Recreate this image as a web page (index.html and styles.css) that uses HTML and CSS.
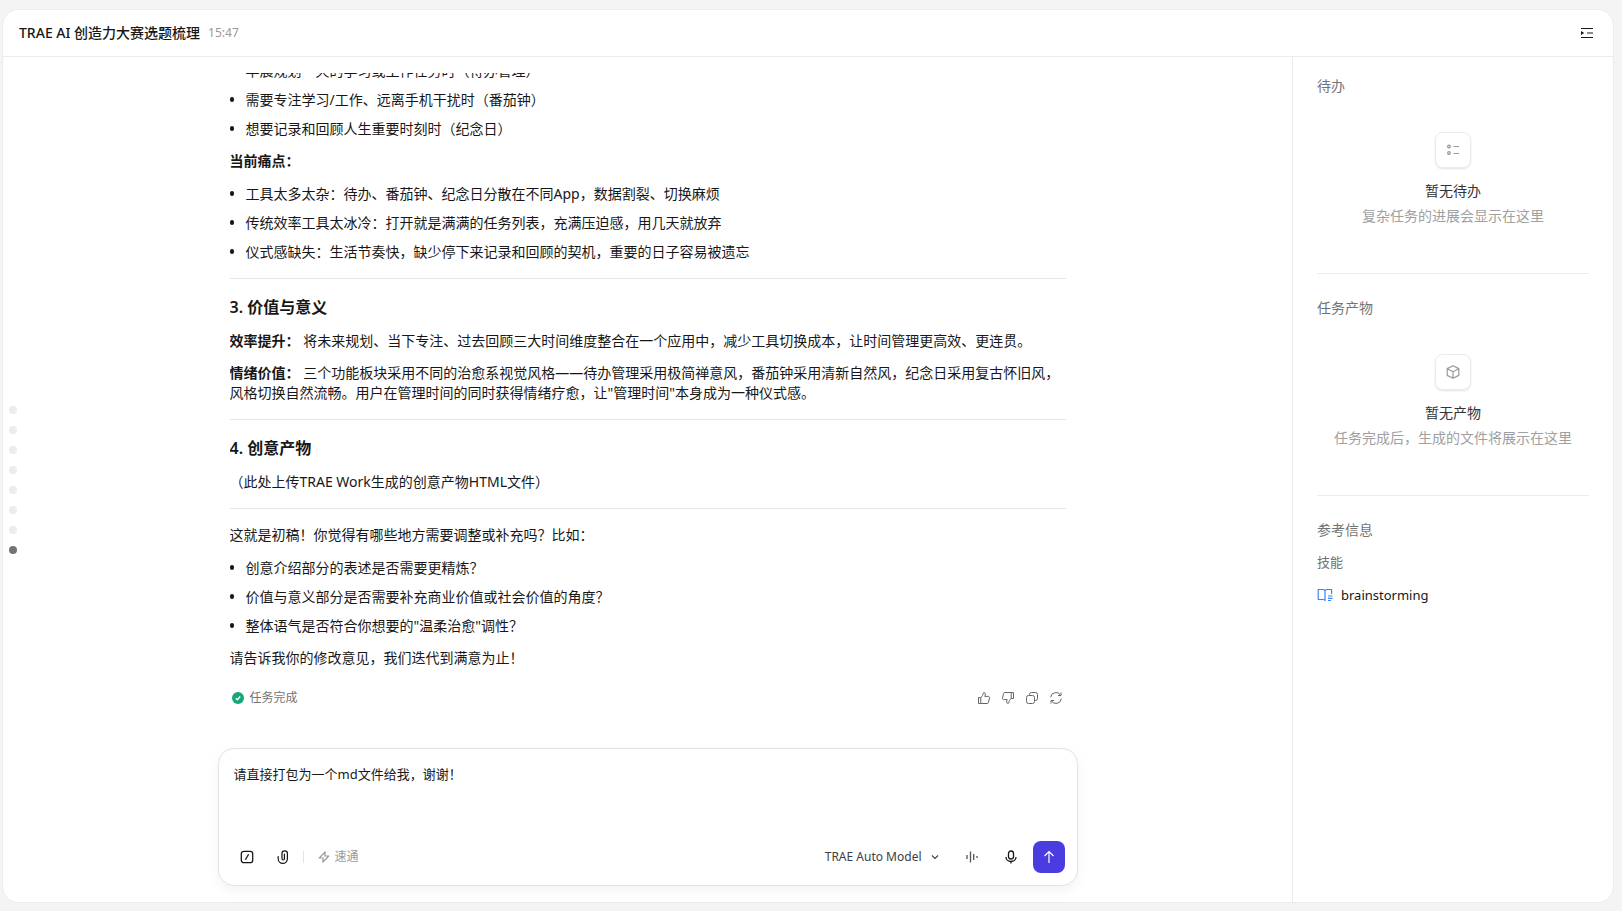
FILE: index.html
```html
<!DOCTYPE html>
<html lang="zh-CN">
<head>
  <meta charset="UTF-8">
  <meta name="viewport" content="width=device-width, initial-scale=1.0">
  <title>TRAE AI 创造力大赛选题梳理</title>
  <link rel="stylesheet" href="styles.css">
</head>
<body>
  <div class="window">
    <header class="topbar">
      <h1>TRAE AI 创造力大赛选题梳理</h1>
      <time>15:47</time>
      <button class="icon-btn toggle" type="button" aria-label="收起侧栏">
        <svg width="14" height="14" viewBox="0 0 14 14" fill="none" stroke="currentColor" stroke-width="1.2"><path d="M1 2.5h12M7 7h6M1 11.500h12"/><path d="M1 5v4l3.200-2z" fill="currentColor" stroke="none"/></svg>
      </button>
    </header>

    <div class="body">
      <main class="chat">
        <nav class="turns" aria-label="对话轮次">
          <span></span><span></span><span></span><span></span><span></span><span></span><span></span><span class="current"></span>
        </nav>

        <div class="scroll">
          <article class="message">
            <ul>
              <li>早晨规划一天的学习或工作任务时（待办管理）</li>
              <li>需要专注学习/工作、远离手机干扰时（番茄钟）</li>
              <li>想要记录和回顾人生重要时刻时（纪念日）</li>
            </ul>
            <p><strong>当前痛点：</strong></p>
            <ul>
              <li>工具太多太杂：待办、番茄钟、纪念日分散在不同App，数据割裂、切换麻烦</li>
              <li>传统效率工具太冰冷：打开就是满满的任务列表，充满压迫感，用几天就放弃</li>
              <li>仪式感缺失：生活节奏快，缺少停下来记录和回顾的契机，重要的日子容易被遗忘</li>
            </ul>
            <hr>
            <h3>3. 价值与意义</h3>
            <p><strong>效率提升：</strong> 将未来规划、当下专注、过去回顾三大时间维度整合在一个应用中，减少工具切换成本，让时间管理更高效、更连贯。</p>
            <p><strong>情绪价值：</strong> 三个功能板块采用不同的治愈系视觉风格——待办管理采用极简禅意风，番茄钟采用清新自然风，纪念日采用复古怀旧风，风格切换自然流畅。用户在管理时间的同时获得情绪疗愈，让"管理时间"本身成为一种仪式感。</p>
            <hr>
            <h3>4. 创意产物</h3>
            <p>（此处上传TRAE Work生成的创意产物HTML文件）</p>
            <hr>
            <p>这就是初稿！你觉得有哪些地方需要调整或补充吗？比如：</p>
            <ul>
              <li>创意介绍部分的表述是否需要更精炼？</li>
              <li>价值与意义部分是否需要补充商业价值或社会价值的角度？</li>
              <li>整体语气是否符合你想要的"温柔治愈"调性？</li>
            </ul>
            <p>请告诉我你的修改意见，我们迭代到满意为止！</p>
          </article>

          <div class="status">
            <svg width="12" height="12" viewBox="0 0 12 12"><circle cx="6" cy="6" r="6" fill="#16a679"/><path d="M3.800 6.200l1.500 1.500 2.900-3.200" fill="none" stroke="#fff" stroke-width="1.300"/></svg>
            <span>任务完成</span>
            <div class="feedback">
              <button class="icon-btn" type="button" aria-label="赞"><svg width="14" height="14" viewBox="0 0 14 14" fill="none" stroke="currentColor" stroke-linejoin="round"><path d="M1.500 6.500h2.300v6H1.500zM3.800 6.500C5.200 5.500 6 4 6.200 2.200 6.300 1.200 8.300 1 8.300 3c0 .9-.2 1.600-.5 2.400h3.500c.9 0 1.400.7 1.200 1.500l-1 4.400c-.2.800-.7 1.200-1.400 1.200H3.800"/></svg></button>
              <button class="icon-btn" type="button" aria-label="踩"><svg width="14" height="14" viewBox="0 0 14 14" fill="none" stroke="currentColor" stroke-linejoin="round"><path d="M12.500 7.500h-2.300v-6h2.300zM10.200 7.500C8.800 8.500 8 10 7.800 11.800 7.700 12.800 5.700 13 5.700 11c0-.9.2-1.600.5-2.400H2.700c-.9 0-1.400-.7-1.200-1.500l1-4.400c.2-.8.700-1.200 1.400-1.200h6.300"/></svg></button>
              <button class="icon-btn" type="button" aria-label="复制"><svg width="14" height="14" viewBox="0 0 14 14" fill="none" stroke="currentColor"><rect x="1.500" y="4.500" width="8" height="8" rx="2"/><path d="M4.500 4.500V3.500a2 2 0 0 1 2-2h4a2 2 0 0 1 2 2v4a2 2 0 0 1-2 2h-1"/></svg></button>
              <button class="icon-btn" type="button" aria-label="重新生成"><svg width="14" height="14" viewBox="0 0 14 14" fill="none" stroke="currentColor"><path d="M1.700 6.300a5.300 5.300 0 0 1 9.800-2.200M12.300 7.700a5.300 5.300 0 0 1-9.800 2.200M12 1.500v3H9M2 12.500v-3h3"/></svg></button>
            </div>
          </div>
        </div>

        <form class="composer">
          <textarea aria-label="消息" rows="3">请直接打包为一个md文件给我，谢谢！</textarea>
          <div class="tools">
            <button class="icon-btn" type="button" aria-label="指令"><svg width="14" height="14" viewBox="0 0 14 14" fill="none" stroke="currentColor" stroke-width="1.300"><rect x="1.300" y="1.300" width="11.400" height="11.400" rx="2.500"/><path d="M8.600 4.200L5.400 9.800"/></svg></button>
            <button class="icon-btn attach" type="button" aria-label="附件"><svg width="14" height="14" viewBox="0 0 14 14" fill="none" stroke="currentColor" stroke-width="1.200" stroke-linecap="round"><path d="M2.200 6.500v2.300a4.600 4.600 0 0 0 9.200 0V3.600a2.700 2.700 0 0 0-5.400 0v5.200a1.200 1.200 0 0 0 2.400 0V4"/></svg></button>
            <span class="sep"></span>
            <button class="fast" type="button"><svg width="12" height="12" viewBox="0 0 12 12" fill="none" stroke="currentColor" stroke-width="1.200" stroke-linejoin="round"><path d="M7.200 .8L1.200 7h4L4.800 11.200 10.800 5h-4z"/></svg>速通</button>
            <button class="model" type="button">TRAE Auto Model<svg width="8" height="8" viewBox="0 0 8 8" fill="none" stroke="currentColor" stroke-width="1.100"><path d="M1 2.500l3 3 3-3"/></svg></button>
            <button class="icon-btn wave" type="button" aria-label="语音模式"><svg width="14" height="14" viewBox="0 0 14 14" fill="none" stroke="currentColor" stroke-width="1.300"><path d="M2 5v4M5.500 1.500v11M8.700 4v6M12 6v2"/></svg></button>
            <button class="icon-btn mic" type="button" aria-label="语音输入"><svg width="14" height="14" viewBox="0 0 14 14" fill="none" stroke="currentColor" stroke-width="1.300"><rect x="4.500" y="1" width="5" height="8" rx="2.500"/><path d="M2 7a5 4.500 0 0 0 10 0M7 11.400v2"/></svg></button>
            <button class="send" type="submit" aria-label="发送"><svg width="14" height="14" viewBox="0 0 14 14" fill="none" stroke="currentColor" stroke-width="1.200"><path d="M7 13V1.500M2.500 6L7 1.500 11.500 6"/></svg></button>
          </div>
        </form>
      </main>

      <aside class="side">
        <section>
          <h2>待办</h2>
          <div class="empty">
            <div class="tile"><svg width="14" height="14" viewBox="0 0 14 14" fill="none" stroke="currentColor"><circle cx="3" cy="3.500" r="1.300" stroke-width="1.300"/><circle cx="3" cy="10" r="1.300" stroke-width="1.300"/><path d="M7.500 3.500H13M7.500 10.500H13"/></svg></div>
            <p class="empty-title">暂无待办</p>
            <p class="empty-desc">复杂任务的进展会显示在这里</p>
          </div>
        </section>
        <section>
          <h2>任务产物</h2>
          <div class="empty">
            <div class="tile"><svg width="14" height="14" viewBox="0 0 14 14" fill="none" stroke="currentColor" stroke-width="1.200" stroke-linejoin="round"><path d="M7 .8l5.800 2.800v6.800L7 13.200 1.200 10.400V3.600zM1.200 3.800L7 6.800l5.800-3M7 6.800v6.200"/></svg></div>
            <p class="empty-title">暂无产物</p>
            <p class="empty-desc">任务完成后，生成的文件将展示在这里</p>
          </div>
        </section>
        <section>
          <h2>参考信息</h2>
          <h4>技能</h4>
          <a class="skill" href="#brainstorming"><svg width="16" height="14" viewBox="0 0 16 14" fill="none" stroke="currentColor" stroke-width="1.200" stroke-linejoin="round"><path d="M8 12.500c-.5-.8-1-1-2-1H1.200V1.500H6c1.200 0 2 .6 2 1.800zM8 3.300c0-1.200.8-1.800 2-1.800h4.600V6M11 8h4.500M11 10.300h4.500M11 12.500h3"/></svg>brainstorming</a>
        </section>
      </aside>
    </div>
  </div>
</body>
</html>
```
FILE: styles.css
```css
* { box-sizing: border-box; }
body {
  margin: 0;
  height: 100vh;
  padding: 9px 8px 8px 2px;
  background: #f4f4f4;
  color: #171717;
  font: 14px/20px "Noto Sans", "Noto Sans CJK SC", sans-serif;
}
h1, h2, h3, h4, p, ul { margin: 0; padding: 0; font-size: 14px; font-weight: 400; }
button { border: 0; padding: 0; background: none; color: inherit; font: inherit; cursor: pointer; }
svg { display: block; flex: none; }

.window {
  display: flex;
  flex-direction: column;
  height: 100%;
  background: #fff;
  border: 1px solid #ececec;
  border-radius: 16px;
  overflow: hidden;
}

/* top bar */
.topbar {
  display: flex;
  align-items: center;
  gap: 8px;
  height: 47px;
  flex: none;
  padding: 0 19px 0 16px;
  border-bottom: 1px solid #ececec;
}
.topbar h1 { font-weight: 500; }
.topbar time { font-size: 12px; color: #999; }
.toggle { margin-left: auto; }

.body { display: flex; flex: 1; min-height: 0; }

/* conversation */
.chat {
  position: relative;
  flex: 1;
  min-width: 0;
  display: flex;
  flex-direction: column;
  padding: 16px 16px;
}
.turns {
  position: absolute;
  left: 6px;
  top: 0;
  bottom: 0;
  display: flex;
  flex-direction: column;
  justify-content: center;
  gap: 12px;
}
.turns span { width: 8px; height: 8px; border-radius: 50%; background: #ececec; }
.turns .current { background: #747474; }

.scroll {
  flex: 1;
  min-height: 0;
  width: 100%;
  max-width: 836px;
  margin: 0 auto;
  display: flex;
  flex-direction: column;
  justify-content: flex-end;
  overflow: hidden;
}
.message { display: flex; flex-direction: column; gap: 12px; flex: none; }
.message ul { display: flex; flex-direction: column; gap: 8px; list-style: none; line-height: 21px; }
.message li { display: flex; gap: 12px; align-items: center; }
.message li::before { content: ""; width: 4px; height: 5px; border-radius: 2px; background: #171717; flex: none; }
.message h3 { font-size: 16px; line-height: 24px; font-weight: 600; }
.message strong { font-weight: 700; }
.message hr { width: 100%; height: 1px; margin: 4px 0; border: 0; background: #e5e5e5; }

.status {
  display: flex;
  align-items: center;
  gap: 6px;
  flex: none;
  margin: 20px 0 40px;
  padding: 0 3px 0 2px;
  font-size: 12px;
  color: #737373;
}
.feedback { display: flex; gap: 10px; margin-left: auto; color: #666; }

/* composer */
.composer {
  width: 100%;
  max-width: 860px;
  margin: 0 auto;
  padding: 15px 12px 12px 15px;
  border: 1px solid #e2e2e2;
  border-radius: 16px;
  box-shadow: 0 4px 12px rgba(0, 0, 0, 0.05);
}
.composer textarea {
  display: block;
  width: 100%;
  height: 61px;
  margin-bottom: 16px;
  padding: 0;
  border: 0;
  outline: 0;
  resize: none;
  color: inherit;
  font: inherit;
  font-size: 13px;
}
.tools { display: flex; align-items: center; height: 32px; padding-left: 6px; }
.attach { margin-left: 22px; }
.sep { width: 1px; height: 12px; margin: 0 14px 0 13px; background: #e5e5e5; }
.fast { display: flex; align-items: center; gap: 5px; font-size: 12px; color: #999; }
.model { display: flex; align-items: center; gap: 9px; margin-left: auto; font-size: 12px; color: #404040; }
.wave { margin-left: 26px; color: #555; }
.mic { margin: 0 15px 0 25px; }
.send {
  display: flex;
  align-items: center;
  justify-content: center;
  width: 32px;
  height: 32px;
  border-radius: 8px;
  background: #4b3ce2;
  color: #fff;
}

/* side panel */
.side { flex: none; width: 321px; padding: 19px 24px; border-left: 1px solid #ececec; }
.side section + section { margin-top: 46px; padding-top: 24px; border-top: 1px solid #ececec; }
.side h2 { color: #737373; }
.side h4 { margin-top: 12px; font-size: 13px; color: #737373; }
.empty { margin-top: 36px; text-align: center; line-height: 22px; }
.tile {
  display: flex;
  align-items: center;
  justify-content: center;
  width: 36px;
  height: 36px;
  margin: 0 auto 12px;
  border: 1px solid #ebebeb;
  border-radius: 8px;
  box-shadow: 0 1px 2px rgba(0, 0, 0, 0.12);
  color: #999;
}
.empty-title { color: #333; }
.empty-desc { margin-top: 3px; color: #a0a0a0; }
.skill { display: flex; align-items: center; gap: 8px; margin-top: 13px; font-size: 13px; color: inherit; text-decoration: none; }
.skill svg { color: #3b82f6; }
```
